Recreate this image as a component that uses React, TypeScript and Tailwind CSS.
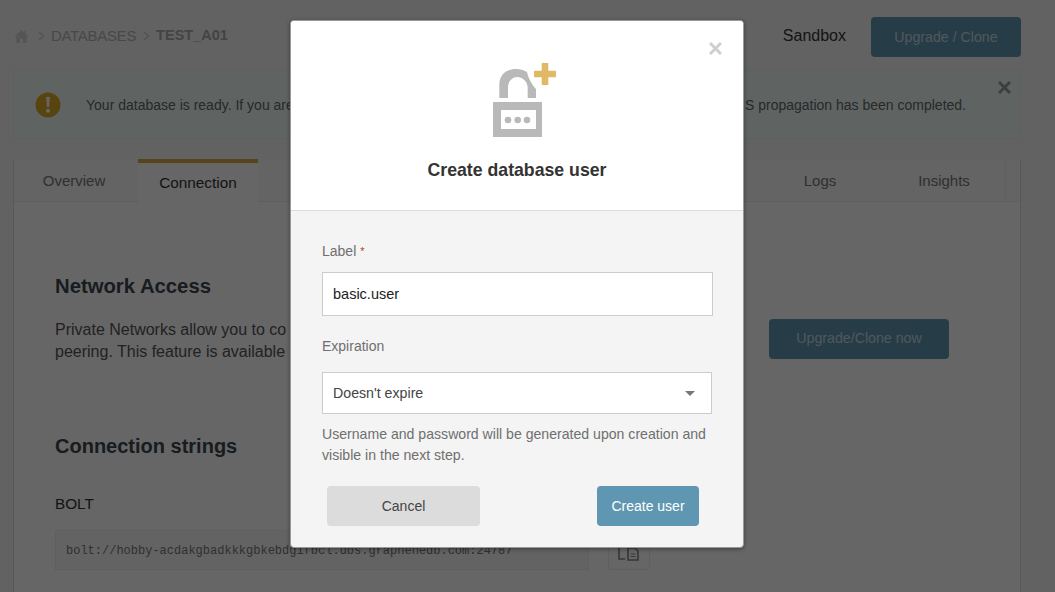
import React from "react";

function Home() {
  return (
    <svg width="15" height="15" viewBox="0 0 15 15" className="text-[#d5d5d5]" fill="currentColor">
      <path d="M7.5 1 L0.5 7.6 L2.2 7.6 L2.2 14 L6 14 L6 9.8 L9 9.8 L9 14 L12.8 14 L12.8 7.6 L14.5 7.6 L11.8 5 L11.8 1.8 L10.2 1.8 L10.2 3.5 Z" />
    </svg>
  );
}

function Chevron({ className }: { className: string }) {
  return (
    <svg width="7" height="10" viewBox="0 0 7 10" fill="none" stroke="#d0d0d0" strokeWidth="1.5" className={className}>
      <path d="M1 1 L5.5 5 L1 9" />
    </svg>
  );
}

function Tab({ children, active, w }: { children: React.ReactNode; active?: boolean; w: string }) {
  return (
    <div
      className={
        active
          ? `${w} h-[43px] -mt-px border-t-4 border-[#d9ab45] bg-white flex items-center justify-center text-[15.3px] text-[#333] pt-px`
          : `${w} h-[42px] flex items-center justify-center text-[15px] text-[#777]`
      }
    >
      {children}
    </div>
  );
}

function Page() {
  return (
    <div className="h-[592px] overflow-hidden bg-[#f4f4f4] px-[13px] font-['Liberation_Sans',sans-serif]">
      <header className="h-[70px] flex items-center">
        <div className="flex items-center pl-px pt-[2px] text-[#b4b4b4]">
          <Home />
          <Chevron className="ml-[9px]" />
          <span className="ml-[6px] text-[15px] tracking-[-0.3px]">DATABASES</span>
          <Chevron className="ml-[7px]" />
          <span className="ml-[6px] text-[14.5px] font-bold text-[#aaa]">TEST_A01</span>
        </div>
        <span className="ml-auto pt-[2px] text-[16px] text-[#333] mr-[25px]">Sandbox</span>
        <button className="w-[150px] h-[40px] pt-[2px] rounded-[4px] bg-[#5f97b2] text-[14.2px] text-[#c9dbe4] mr-[21px] mt-[4px]">
          Upgrade / Clone
        </button>
      </header>
      <div className="relative h-[69px] mr-[21px] bg-[#eef9f8] border border-[#e8f0ef] flex items-center pl-[21px] text-[14px] text-[#666]">
        <svg width="26" height="26" viewBox="0 0 26 26" className="shrink-0 mr-[25px]">
          <circle cx="13" cy="13" r="12.5" fill="#d9ab25" />
          <path d="M11.2 5 H14.8 L14 15 H12 Z" fill="#fff" />
          <circle cx="13" cy="18.7" r="2" fill="#fff" />
        </svg>
        <span className="flex-1 pt-[2px]">Your database is ready. If you are</span>
        <span className="mr-[54px] pt-[2px]">S propagation has been completed.</span>
        <svg width="13" height="13" viewBox="0 0 13 13" className="absolute right-[9px] top-[10px]" stroke="#9a9f9e" strokeWidth="3">
          <path d="M1 1 L12 12 M12 1 L1 12" />
        </svg>
      </div>
      <section className="mt-[21px] mr-[21px] h-[500px] bg-white border-x border-[#ddd]">
        <div className="flex h-[42px] bg-[#f9f9f9] border-b border-[#eee] pr-[14px]">
          <Tab w="w-[124px] pr-[4px]">Overview</Tab>
          <Tab w="w-[120px]" active>
            Connection
          </Tab>
          <div className="flex-1" />
          <Tab w="w-[126px]">Logs</Tab>
          <Tab w="w-[122px]">Insights</Tab>
          <div className="w-px bg-[#eee]" />
        </div>
        <div className="pl-[41px] pr-[71px]">
          <h2 className="mt-[70px] text-[20.3px] font-bold text-[#3c4750] leading-[28px]">Network Access</h2>
          <div className="flex mt-[19px]">
            <p className="flex-1 text-[16px] leading-[22px] text-[#555]">
              Private Networks allow you to co
              <br />
              peering. This feature is available
            </p>
            <button className="w-[180px] h-[40px] rounded-[4px] bg-[#5f97b2] text-[14.2px] text-[#c9dbe4]">
              Upgrade/Clone now
            </button>
          </div>
          <h2 className="mt-[69px] text-[20px] font-bold text-[#3c4750] leading-[28px]">Connection strings</h2>
          <div className="mt-[33px] text-[15.3px] leading-[22px] text-[#333]">BOLT</div>
          <div className="flex mt-[15px] gap-[19px]">
            <div className="w-[534px] h-[40px] bg-[#f8f8f8] border border-[#eee] flex items-center pl-[10px] pt-[2px] text-[12px] font-['Liberation_Mono',monospace] text-[#777] whitespace-nowrap">
              bolt://hobby-acdakgbadkkkgbkebdgifbcl.dbs.graphenedb.com:24787
            </div>
            <div className="w-[42px] h-[40px] rounded-[4px] border border-[#eee] flex items-center justify-center pt-[8px]">
              <svg width="22" height="14" viewBox="0 0 22 14" fill="none" stroke="#888" strokeWidth="1.6">
                <path d="M1 0 V12 H7" />
                <path d="M10 4 V13 H20 V4 L17 1 H10 Z" />
                <path d="M12.5 7 H17.5 M12.5 9.5 H17.5" strokeWidth="1" />
              </svg>
            </div>
          </div>
        </div>
      </section>
    </div>
  );
}

function LockPlus() {
  return (
    <svg width="64" height="74" viewBox="0 0 64 74">
      <path d="M0 39 H49 V74 H0 Z M8 47 V66 H43 V47 Z" fill="#b9b9b9" fillRule="evenodd" />
      <circle cx="15" cy="57" r="3.3" fill="#b9b9b9" />
      <circle cx="24.7" cy="57" r="3.3" fill="#b9b9b9" />
      <circle cx="34" cy="57" r="3.3" fill="#b9b9b9" />
      <path
        d="M6.3 35 V22 C6.3 12 13 6 23 6 C27 6 31 7 34 9 C35 15 40 23 43 26 V35 H34.7 V25 C34.7 18 29 14 24.5 14 C19 14 15 18 15 25 V35 Z"
        fill="#b9b9b9"
      />
      <path d="M41 7.7 H48.7 V0 H55.3 V7.7 H63 V14.3 H55.3 V22 H48.7 V14.3 H41 Z" fill="#e0b966" />
    </svg>
  );
}

function Modal() {
  return (
    <div className="absolute left-[290px] top-[20px] w-[454px] h-[528px] bg-[#f4f4f4] border border-[#999] rounded-[4px] overflow-hidden font-['Liberation_Sans',sans-serif] shadow-[0_1px_4px_rgba(0,0,0,0.4)]">
      <div className="relative h-[190px] bg-white border-b border-[#dcdcdc] flex flex-col items-center">
        <svg width="13" height="13" viewBox="0 0 13 13" className="absolute right-[21px] top-[21px]" stroke="#cfcfcf" strokeWidth="3">
          <path d="M1 1 L12 12 M12 1 L1 12" />
        </svg>
        <div className="mt-[42px] ml-[16px]">
          <LockPlus />
        </div>
        <h1 className="mt-[21px] text-[17.7px] leading-[24px] font-bold text-[#333]">Create database user</h1>
      </div>
      <div className="px-[31px] pt-[30px]">
        <label className="block text-[14px] leading-[20px] text-[#6f6f6f]">
          Label <span className="text-[#c0392b] text-[11px] align-top">*</span>
        </label>
        <input
          readOnly
          value="basic.user"
          className="block mt-[11px] w-[391px] h-[44px] bg-white border border-[#ccc] px-[10px] text-[14.5px] text-[#222] outline-none"
        />
        <label className="block mt-[20px] text-[14px] leading-[20px] text-[#6f6f6f]">Expiration</label>
        <div className="mt-[16px] w-[390px] h-[42px] bg-white border border-[#ccc] flex items-center justify-between pl-[10px] pr-[16px] text-[14.2px] text-[#444]">
          <span className="pt-[2px]">Doesn't expire</span>
          <span className="w-0 h-0 border-x-[5px] border-x-transparent border-t-[5px] border-t-[#777]" />
        </div>
        <p className="mt-[10px] text-[14.1px] leading-[21px] text-[#6f6f6f] whitespace-nowrap">
          Username and password will be generated upon creation and
          <br />
          visible in the next step.
        </p>
        <div className="flex justify-between mt-[20px] pl-[5px] pr-[13px]">
          <button className="w-[153px] h-[40px] rounded-[4px] bg-[#dcdcdc] text-[14px] text-[#444]">Cancel</button>
          <button className="w-[102px] h-[40px] rounded-[4px] bg-[#5f97b2] text-[14px] text-white">Create user</button>
        </div>
      </div>
    </div>
  );
}

export default function App() {
  return (
    <div className="relative h-[592px] overflow-hidden">
      <Page />
      <div className="absolute inset-0 bg-black/60" />
      <Modal />
    </div>
  );
}
